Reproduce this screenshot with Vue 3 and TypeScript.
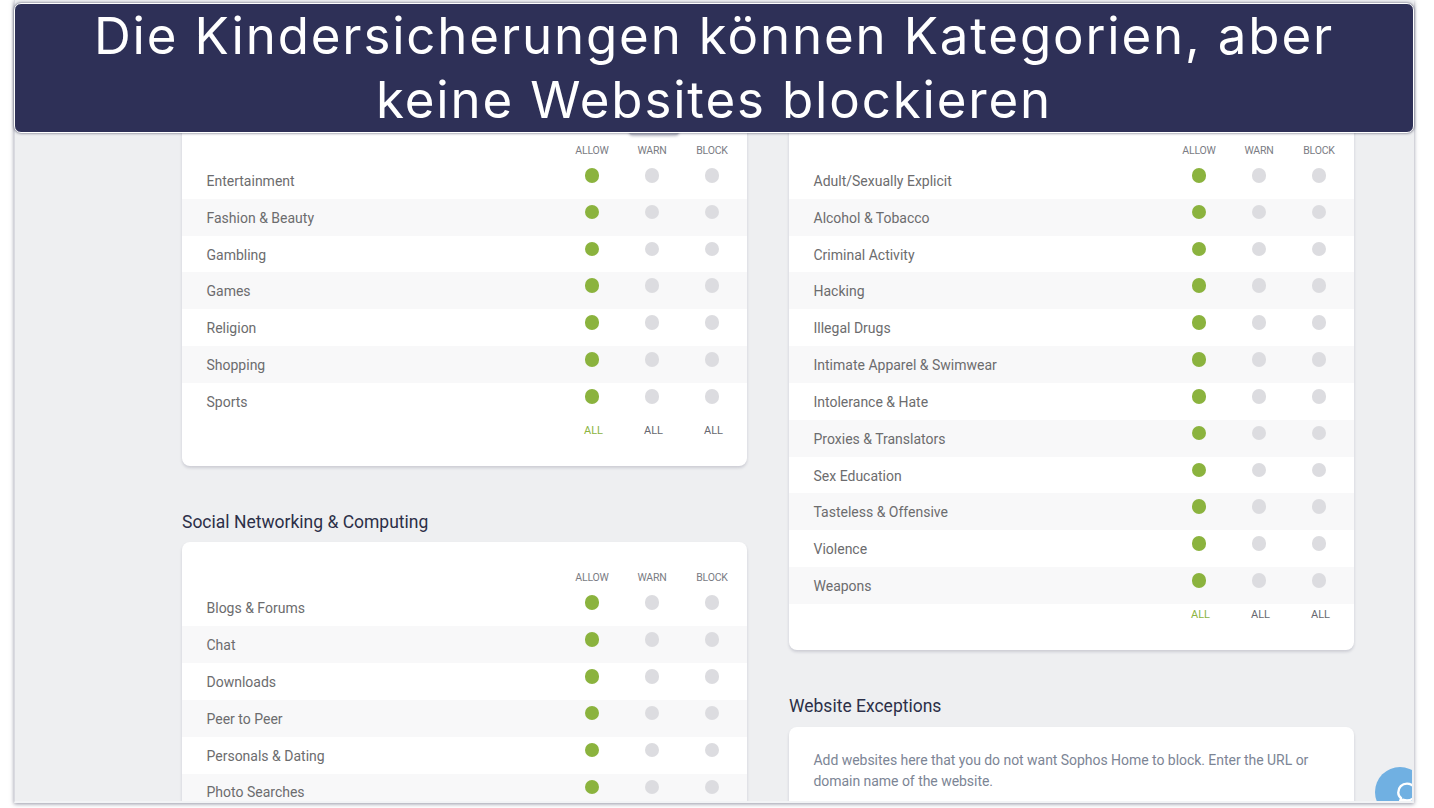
<template>
  <div class="page">
    <div class="frame">
      <div class="columns">
        <div class="column">
          <section class="group">
            <div class="card">
              <div class="tip"></div>
              <div class="heads">
                <span></span><span>ALLOW</span><span>WARN</span><span>BLOCK</span>
              </div>
              <div v-for="(name, i) in general" :key="name" class="row" :class="{ band: i % 2 === 1 }">
                <span class="name">{{ name }}</span>
                <i class="dot on"></i><i class="dot"></i><i class="dot"></i>
              </div>
              <div class="alls">
                <span></span><span class="green">ALL</span><span>ALL</span><span>ALL</span>
              </div>
            </div>
          </section>
          <section class="group">
            <h2>Social Networking &amp; Computing</h2>
            <div class="card">
              <div class="heads">
                <span></span><span>ALLOW</span><span>WARN</span><span>BLOCK</span>
              </div>
              <div v-for="(name, i) in social" :key="name" class="row" :class="{ band: i % 2 === 1 }">
                <span class="name">{{ name }}</span>
                <i class="dot on"></i><i class="dot"></i><i class="dot"></i>
              </div>
            </div>
          </section>
        </div>
        <div class="column">
          <section class="group">
            <div class="card">
              <div class="heads">
                <span></span><span>ALLOW</span><span>WARN</span><span>BLOCK</span>
              </div>
              <div v-for="(name, i) in adult" :key="name" class="row" :class="{ band: i % 2 === 1 }">
                <span class="name">{{ name }}</span>
                <i class="dot on"></i><i class="dot"></i><i class="dot"></i>
              </div>
              <div class="alls">
                <span></span><span class="green">ALL</span><span>ALL</span><span>ALL</span>
              </div>
            </div>
          </section>
          <section class="group">
            <h2>Website Exceptions</h2>
            <div class="card exceptions">
              <p>Add websites here that you do not want Sophos Home to block. Enter the URL or domain name of the website.</p>
            </div>
          </section>
        </div>
      </div>
      <div class="chat">
        <svg width="20" height="21.7" viewBox="0 0 24 26" fill="none" stroke="#fff" stroke-width="2.8">
          <path d="M5 19.5C2.5 17.5 1.5 15 1.5 12.5C1.5 6.5 6 2 12 2C18 2 22.5 6.5 22.5 12.5C22.5 18 18 22 12 22C10.5 22 9 21.8 7.8 21.3L3.5 23.5Z" stroke-linejoin="round" />
        </svg>
      </div>
    </div>
    <div class="banner">Die Kindersicherungen können Kategorien, aber<br />keine Websites blockieren</div>
  </div>
</template>

<script setup lang="ts">
const general = ['Entertainment', 'Fashion & Beauty', 'Gambling', 'Games', 'Religion', 'Shopping', 'Sports']
const social = ['Blogs & Forums', 'Chat', 'Downloads', 'Peer to Peer', 'Personals & Dating', 'Photo Searches']
const adult = [
  'Adult/Sexually Explicit',
  'Alcohol & Tobacco',
  'Criminal Activity',
  'Hacking',
  'Illegal Drugs',
  'Intimate Apparel & Swimwear',
  'Intolerance & Hate',
  'Proxies & Translators',
  'Sex Education',
  'Tasteless & Offensive',
  'Violence',
  'Weapons'
]
</script>

<style>
html, body {
  margin: 0;
  background: #fff;
}
</style>

<style scoped>
.page {
  position: relative;
  width: 1434px;
  height: 808px;
  overflow: hidden;
  background: #fff;
  font-family: "Roboto", "Liberation Sans", sans-serif;
}

.frame {
  position: relative;
  box-sizing: border-box;
  width: 1400px;
  height: 803px;
  margin-left: 14px;
  overflow: hidden;
  background: #eeeff1;
  border-right: 2px solid #eeeff1;
  border-bottom: 2px solid #f3f4f6;
  border-left: 1px solid #d9dae0;
  box-shadow: 0 1px 4px rgba(60, 62, 90, 0.55);
}

.columns {
  display: grid;
  grid-template-columns: 565px 565px;
  gap: 42px;
  padding: 115px 0 0 167px;
}

.group {
  margin-bottom: 43px;
}

h2 {
  margin: 0 0 7.6px;
  font-size: 17.5px;
  line-height: 26px;
  font-weight: 400;
  color: #2c2f48;
}

.card {
  position: relative;
  box-sizing: border-box;
  padding: 28px 5px 27px 0;
  background: #fff;
  border-radius: 8px;
  box-shadow: 0 2px 3px rgba(70, 72, 100, 0.2);
}

.tip {
  position: absolute;
  left: 447px;
  top: 0;
  width: 50px;
  height: 20px;
  background: #b9bbc6;
  border-radius: 4px;
  box-shadow: 0 1px 3px rgba(70, 72, 100, 0.4);
}

.heads,
.alls {
  display: grid;
  grid-template-columns: 1fr 60px 60px 60px;
  height: 16px;
  line-height: 16px;
  text-align: center;
}

.heads {
  margin-bottom: 3px;
  font-size: 10.5px;
  letter-spacing: -0.2px;
  color: #7a7c84;
}

.alls {
  margin-top: 3px;
  padding-left: 3px;
  font-size: 11px;
  color: #66686f;
}

.alls span:not(:first-child) {
  transform: translateX(1.5px);
}

.alls .green {
  color: #8cb43f;
}

.row {
  display: grid;
  grid-template-columns: 1fr 60px 60px 60px;
  justify-items: center;
  height: 36.83px;
  margin-right: -5px;
  padding-right: 5px;
}

.row.band {
  background: #f8f8f9;
}

.name {
  justify-self: start;
  padding: 0.9px 0 0 24.5px;
  font-size: 14px;
  line-height: 36.83px;
  color: #6c6c6e;
}

.dot {
  width: 14.6px;
  height: 14.6px;
  margin-top: 6px;
  border-radius: 50%;
  background: #dcdce0;
}

.dot.on {
  background: #8bb33e;
}

.exceptions {
  padding: 23px 30px 60px 24.5px;
}

.exceptions p {
  margin: 0;
  font-size: 14px;
  line-height: 21px;
  letter-spacing: -0.04px;
  color: #7c8595;
}

.chat {
  position: absolute;
  left: 1360px;
  top: 767px;
  box-sizing: border-box;
  width: 50px;
  height: 50px;
  padding: 15px 0 0 22px;
  border-radius: 50%;
  background: #70b0e2;
}

.chat svg {
  display: block;
}

.banner {
  position: absolute;
  left: 14px;
  top: 3px;
  box-sizing: border-box;
  width: 1400px;
  height: 130px;
  background: #2e3057;
  border: 1px solid #fff;
  border-radius: 7px;
  box-shadow: 0 0 3px rgba(40, 42, 70, 0.8);
  font-family: "Inter", "Liberation Sans", sans-serif;
  font-size: 51px;
  font-weight: 400;
  letter-spacing: 1.85px;
  line-height: 64px;
  text-align: center;
  color: #fff;
}
</style>
